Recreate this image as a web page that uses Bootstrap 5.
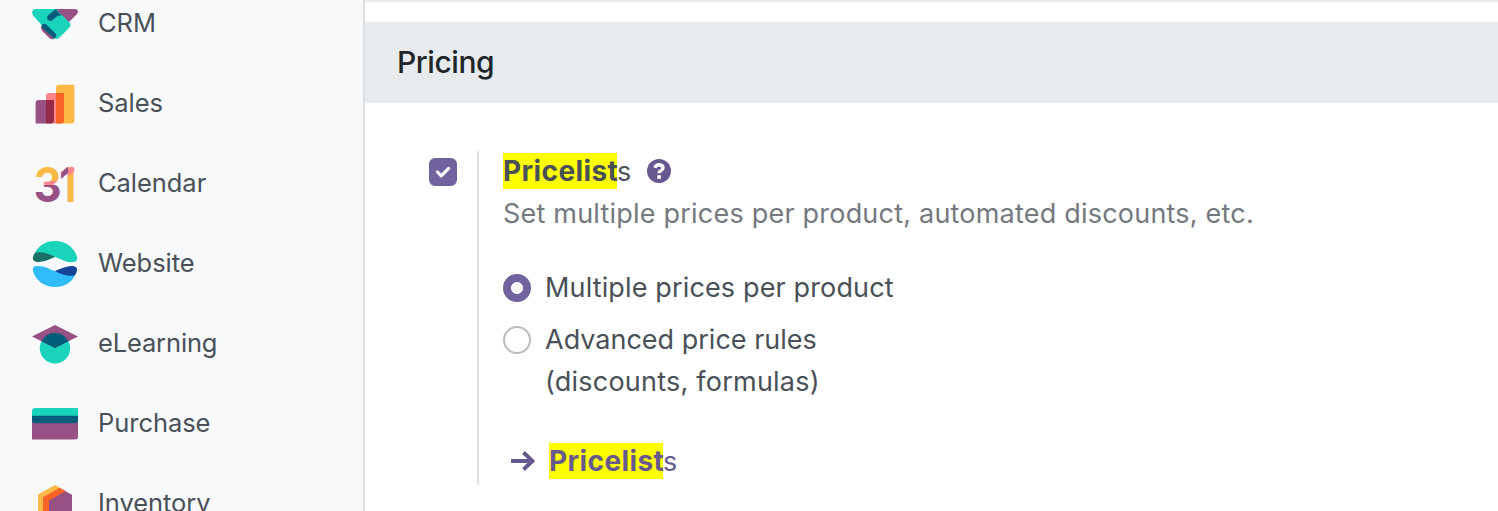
<!DOCTYPE html>
<html lang="en">
<head>
<meta charset="utf-8">
<meta name="viewport" content="width=device-width, initial-scale=1">
<title>Settings</title>
<link href="https://cdn.jsdelivr.net/npm/bootstrap@5.3.0/dist/css/bootstrap.min.css" rel="stylesheet">
<style>
  body { font-family: Inter, "Liberation Sans", sans-serif; font-size: 27px; line-height: 42px; color: #495057; height: 511px; }
  .app-side { width: 365px; background: #f8f9fb; border-right: 2px solid #dcdfe4; }
  .app-side .nav { margin-top: -16px; }
  .app-link { height: 80px; padding: 0 0 2px 32px; gap: 20px; font-size: 25.5px; letter-spacing: -.05px; color: #495057; }
  .app-link svg { width: 46px; height: 46px; margin-top: 2px; overflow: visible; }
  .top-rule { height: 2px; background: #e7eaed; margin-bottom: 20px; }
  .section-head { height: 81px; background: #e7ebee; color: #212529; font-size: 30px; font-weight: 500; letter-spacing: -.45px; padding: 0 32px 1px; margin: 0; }
  .setting { padding: 48px 0 0 64px; }
  .setting-body { border-left: 2px solid #dee2e6; margin-left: 20px; padding-left: 24px; height: 334px; }
  .form-check-input.big { width: 28px; height: 28px; margin: 0; border: 2px solid #bdbdbd; }
  .form-check-input.big:checked { background-color: #71639e; border-color: #71639e; }
  .form-check-input.box { margin-top: 7px; border-radius: 6px; background-size: 22px; }
  .form-check-input.box:checked { background-image: url("data:image/svg+xml,%3csvg xmlns='http://www.w3.org/2000/svg' viewBox='0 0 20 20'%3e%3cpath fill='none' stroke='%23f8f9fc' stroke-linecap='round' stroke-linejoin='round' stroke-width='2.900' d='M5 10l3.400 3.500 6.700-6.700'/%3e%3c/svg%3e"); }
  .form-check-input.dot { margin-top: 7px; }
  .form-check-input.dot:checked { background-image: radial-gradient(circle, #f8f9fc 5.6px, transparent 6.4px); }
  .hit { background: #ff0; color: inherit; font-weight: 650; font-size: 28px; letter-spacing: .4px; padding: 0; display: inline-block; height: 36px; line-height: 36px; width: 114px; white-space: nowrap; }
  .brand-ink { color: #66598f; }
  .desc { color: #74797f; letter-spacing: .21px; }
  .option { gap: 14px; letter-spacing: .14px; }
</style>
</head>
<body class="d-flex overflow-hidden bg-white">
<aside class="app-side flex-shrink-0 overflow-hidden">
  <nav class="nav flex-column flex-nowrap">
    <a class="app-link d-flex align-items-center text-decoration-none" href="#">
      <svg viewBox="0 0 46 46"><path fill="#985184" d="M23 8H43.500Q47.500 9 45 13L36 22Z"/><path fill="#1ad3bb" d="M3 8H24L37.500 21.500Q39.500 24 37.500 26.500L27.500 36.500Q25 39 22.500 37L9.500 24 1 14.500Q-1.500 9 3 8Z"/><path fill="#985184" d="M9.300 24.500L22 38Q19.500 38.800 17.500 37.200L10 29.700Q8.200 27.500 9.300 24.500Z"/><path fill="#005e7a" d="M9.800 24Q12.500 21.500 15 24L24 33Q25 35.500 22 38L9.500 26ZM23.500 8.200L30 14.700Q26.500 14 24 16L20.800 19Q18.500 21 16 18.800 14 16.300 16.500 14Z"/></svg>
      <span>CRM</span></a>
    <a class="app-link d-flex align-items-center text-decoration-none" href="#">
      <svg viewBox="0 0 46 46"><path fill="#fbb945" d="M24 6.700Q24 3.700 27 3.700H42.400V39.500Q42.400 42.500 39.400 42.500H24Z"/><path fill="#ff868c" d="M14 15Q14 12 17 12H24V42.500H14Z"/><path fill="#fc6427" d="M24 12H32V39.500Q32 42.500 29 42.500H24Z"/><path fill="#985184" d="M3.600 22Q3.600 19 6.600 19H14V42.500H3.600Z"/><path fill="#962b48" d="M14 19H22V39.500Q22 42.500 19 42.500H14Z"/></svg>
      <span>Sales</span></a>
    <a class="app-link d-flex align-items-center text-decoration-none" href="#">
      <svg viewBox="0 0 46 46"><defs>
        <linearGradient id="three" gradientUnits="userSpaceOnUse" x1="0" y1="0" x2="0" y2="46"><stop offset=".44" stop-color="#fbb945"/><stop offset=".44" stop-color="#ff868c"/><stop offset=".53" stop-color="#ff868c"/><stop offset=".53" stop-color="#985184"/></linearGradient>
        <linearGradient id="one" gradientUnits="userSpaceOnUse" x1="0" y1="0" x2="56" y2="0"><stop offset=".785" stop-color="#985184"/><stop offset=".785" stop-color="#fbb945"/></linearGradient></defs>
        <g font-family="Inter" font-weight="700" font-size="48"><text transform="scale(.9 1)" x="1.900" y="40.500" fill="url(#three)">3</text><text transform="scale(.82 1)" x="33.200" y="40.500" fill="url(#one)">1</text></g>
        <path fill="#ff868c" d="M36 8.500L38 6.200Q40 5 42.300 7V10.500L36 15Z"/></svg>
      <span>Calendar</span></a>
    <a class="app-link d-flex align-items-center text-decoration-none" href="#">
      <svg viewBox="0 0 46 46"><path fill="#1ad3bb" d="M3 11.800C6.500 4.500 14 0 23 0C35 0 43.500 8 45.200 17Q45.300 20.800 41.500 21C34 21.800 30 18.500 23 16Z"/><path fill="#1a6f66" d="M3 11.800Q12 9.500 23 16C17 18.500 11 21.500 5 21Q.7 20.500 .9 17Q1.400 14 3 11.800Z"/><path fill="#2ebcfa" d="M43 34.200C39.500 41.500 32 46 23 46C11 46 2.500 38 .8 29Q.7 25.200 4.500 25C12 24.200 16 27.500 23 30Z"/><path fill="#144496" d="M43 34.200Q34 36.500 23 30C29 27.500 35 24.500 41 25Q45.300 25.500 45.100 29Q44.600 32 43 34.200Z"/></svg>
      <span>Website</span></a>
    <a class="app-link d-flex align-items-center text-decoration-none" href="#">
      <svg viewBox="0 0 46 46"><clipPath id="cap"><path d="M0 15.500L23 4 46 15.500 23 27Z"/></clipPath><circle cx="23" cy="27.200" r="15.200" fill="#1ad3bb"/><path fill="#985184" d="M0 15.500L23 4 46 15.500 23 27Z"/><circle cx="23" cy="27.200" r="15.200" fill="#005e7a" clip-path="url(#cap)"/></svg>
      <span style="letter-spacing:-.15px">eLearning</span></a>
    <a class="app-link d-flex align-items-center text-decoration-none" href="#">
      <svg viewBox="0 0 46 46"><path fill="#985184" d="M0 18H46V35.500Q46 38.500 43 38.500H0Z"/><path fill="#1ad3bb" d="M0 10Q0 7 3 7H46V18H0Z"/><path fill="#005e7a" d="M0 14.800H46V19.200Q46 22.200 43 22.200H3Q0 22.200 0 19.200Z"/></svg>
      <span>Purchase</span></a>
    <a class="app-link d-flex align-items-center text-decoration-none flex-shrink-0" href="#">
      <svg viewBox="0 0 46 46"><path fill="#fbb945" d="M6 13.500L23 4 28 6.700V42L6 33Z"/><path fill="#fc6427" d="M11 16.300L27.600 6.700 34 10.200V42L11 36Z"/><path fill="#985184" d="M17 19.600L33.500 10.200 40 13.800V33L23 42 17 39Z"/></svg>
      <span>Inventory</span></a>
  </nav>
</aside>
<main class="flex-grow-1">
  <div class="top-rule"></div>
  <h2 class="section-head d-flex align-items-center"><span>Pricing</span></h2>
  <section class="setting d-flex align-items-start">
    <input class="form-check-input big box flex-shrink-0" type="checkbox" checked aria-label="Pricelists">
    <div class="setting-body">
      <div class="d-flex align-items-center" style="height:42px">
        <label><span class="hit">Pricelist</span>s</label>
        <svg class="ms-3" width="24" height="24" viewBox="0 0 24 24" style="margin-bottom:2px"><circle cx="12" cy="12" r="12" fill="#66598f"/><path d="M7.700 8.800Q9.300 5.800 12 5.800Q16 6 16 9Q15.900 10.700 13.800 11.700Q12 12.500 12 14.300" fill="none" stroke="#fff" stroke-width="3.400"/><path fill="#fff" d="M10.300 16.200h3.600v3.600h-3.600z"/></svg>
      </div>
      <div class="desc text-nowrap">Set multiple prices per product, automated discounts, etc.</div>
      <div class="option d-flex align-items-start" style="margin-top:32px">
        <input class="form-check-input big dot flex-shrink-0" type="radio" name="mode" id="m1" checked>
        <label for="m1">Multiple prices per product</label>
      </div>
      <div class="option d-flex align-items-start" style="margin-top:10px">
        <input class="form-check-input big dot flex-shrink-0" type="radio" name="mode" id="m2">
        <label for="m2"><span style="letter-spacing:0">Advanced price rules</span><br><span style="letter-spacing:.23px">(discounts, formulas)</span></label>
      </div>
      <a class="brand-ink d-flex align-items-center text-decoration-none" href="#" style="margin-top:38px;height:42px;padding-left:8px">
        <svg width="24" height="20" viewBox="0 0 24 20" style="margin:-2px 14px 0 0"><path d="M0 10H21M12.500 1.500L21.500 10 12.500 18.500" fill="none" stroke="#66598f" stroke-width="3.900"/></svg>
        <span><span class="hit">Pricelist</span>s</span>
      </a>
    </div>
  </section>
</main>
<script src="https://cdn.jsdelivr.net/npm/bootstrap@5.3.0/dist/js/bootstrap.bundle.min.js"></script>
</body>
</html>
